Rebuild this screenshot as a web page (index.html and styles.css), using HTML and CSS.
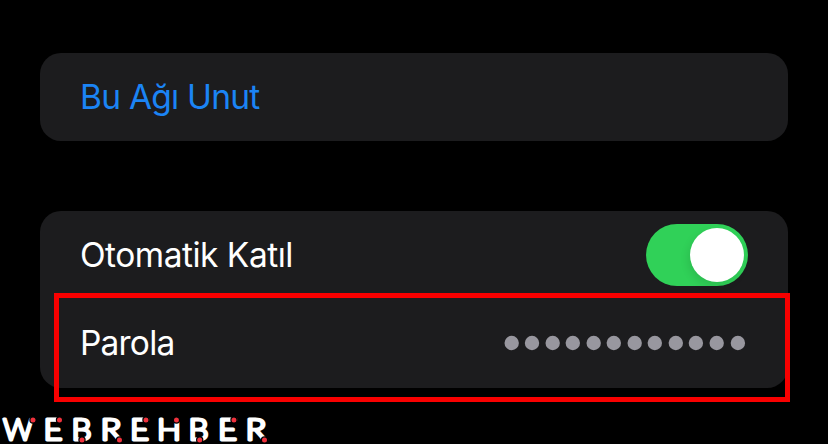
FILE: index.html
```
<!DOCTYPE html>
<html lang="tr">
<head>
<meta charset="utf-8">
<title>Wi-Fi</title>
<link rel="stylesheet" href="styles.css">
</head>
<body>
<main class="settings">
  <section class="card">
    <div class="row link"><span class="forget">Bu Ağı Unut</span></div>
  </section>
  <section class="card">
    <div class="row"><span class="auto">Otomatik Katıl</span><span class="switch"><span class="knob"></span></span></div>
    <div class="row password"><span class="pass">Parola</span>
      <svg class="dots" width="244" height="16" viewBox="0 0 244 16">
        <circle cx="7.7" cy="8" r="7.2"/><circle cx="28" cy="8" r="7.2"/><circle cx="48.7" cy="8" r="7.2"/><circle cx="68.8" cy="8" r="7.2"/>
        <circle cx="89.7" cy="8" r="7.2"/><circle cx="109.8" cy="8" r="7.2"/><circle cx="130.7" cy="8" r="7.2"/><circle cx="150.8" cy="8" r="7.2"/>
        <circle cx="171.8" cy="8" r="7.2"/><circle cx="191.9" cy="8" r="7.2"/><circle cx="212.7" cy="8" r="7.2"/><circle cx="233.9" cy="8" r="7.2"/>
      </svg>
    </div>
    <div class="highlight"></div>
  </section>
</main>
<svg class="brand" width="280" height="32" viewBox="0 412 280 32">
  <g class="letters">
    <text x="3" y="440.4" textLength="30" lengthAdjust="spacingAndGlyphs">W</text>
    <text x="43.5" y="440.4" textLength="19" lengthAdjust="spacingAndGlyphs">E</text>
    <text x="71.5" y="440.4" textLength="20" lengthAdjust="spacingAndGlyphs">B</text>
    <text x="100.5" y="440.4" textLength="21" lengthAdjust="spacingAndGlyphs">R</text>
    <text x="130" y="440.4" textLength="19" lengthAdjust="spacingAndGlyphs">E</text>
    <text x="157" y="440.4" textLength="24" lengthAdjust="spacingAndGlyphs">H</text>
    <text x="188.5" y="440.4" textLength="20" lengthAdjust="spacingAndGlyphs">B</text>
    <text x="218" y="440.4" textLength="19" lengthAdjust="spacingAndGlyphs">E</text>
    <text x="245.5" y="440.4" textLength="21" lengthAdjust="spacingAndGlyphs">R</text>
  </g>
  <g class="accents">
    <circle cx="33" cy="420" r="3.1"/><circle cx="59.5" cy="420" r="3.1"/><circle cx="82" cy="440" r="3.1"/>
    <circle cx="119.5" cy="440" r="3.1"/><circle cx="146" cy="420" r="3.1"/><circle cx="176.5" cy="420" r="3.1"/>
    <circle cx="199.7" cy="440" r="3.1"/><circle cx="234" cy="420" r="3.1"/><circle cx="264.5" cy="440" r="3.1"/>
  </g>
</svg>
</body>
</html>
```
FILE: styles.css
```
* { box-sizing: border-box; }
body { margin: 0; height: 444px; overflow: hidden; background: #000; color: #fff; font-family: Inter, "Liberation Sans", sans-serif; display: flex; flex-direction: column; }
.settings { height: 412px; flex: none; padding: 53px 40px 0; display: flex; flex-direction: column; gap: 70px; }
.card { position: relative; background: #1c1c1e; border-radius: 21px; }
.row { height: 88px; padding: 0 40px; display: flex; align-items: center; justify-content: space-between; font-size: 33.5px; line-height: 40px; white-space: nowrap; }
.link { color: #1b84f5; }
.forget { letter-spacing: -0.75px; }
.auto { letter-spacing: -0.5px; }
.pass { letter-spacing: -0.8px; }
.password { height: 89px; padding-bottom: 1px; }
.switch { width: 102px; height: 62px; border-radius: 31px; background: #30d158; padding: 4px; display: flex; justify-content: flex-end; }
.knob { width: 54px; height: 54px; border-radius: 50%; background: #fff; box-shadow: -2px 4px 9px rgba(0,0,0,.1); }
.dots { fill: #98979f; }
.highlight { position: absolute; left: 14px; top: 82px; width: 736px; height: 109px; border: 5px solid #f80000; }
.brand { display: block; flex: none; }
.letters { font-family: Lato, sans-serif; font-size: 28.5px; font-weight: 300; fill: #fff; stroke: #fff; stroke-width: 2.8px; stroke-linejoin: round; }
.accents { fill: #f0313c; stroke: #000; stroke-width: 1.2px; }
```
